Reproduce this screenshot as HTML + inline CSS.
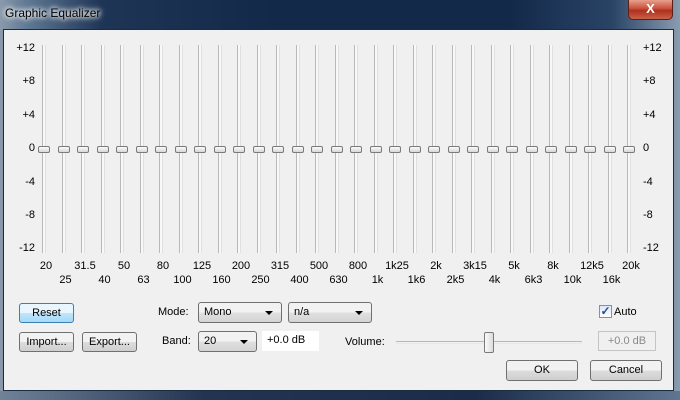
<!DOCTYPE html>
<html><head><meta charset="utf-8"><style>
*{margin:0;padding:0;box-sizing:border-box}
body{width:680px;height:400px;overflow:hidden;font-family:"Liberation Sans",sans-serif;font-size:11px;color:#000;position:relative;
background:linear-gradient(90deg,#8a9aab 0,#5f7893 4%,#1e3556 15%,#13294a 40%,#13294a 75%,#2a4466 90%,#8a9cb0 100%)}
.title{position:absolute;left:5px;top:6px;font-size:12px;color:#000;text-shadow:0 0 8px #fff,0 0 6px #fff,0 0 4px #fff}
.close{position:absolute;left:628px;top:0;width:45px;height:20px;border:1px solid #5a2018;border-top:none;border-radius:0 0 5px 5px;background:linear-gradient(#e8a08e,#c8503a 45%,#b03020 55%,#c86048);color:#fff;font-weight:bold;font-size:13px;text-align:center;line-height:18px}
.client{position:absolute;left:3px;top:29px;width:671px;height:362px;background:#f0f0f0;border:1px solid #1a2c44}
.bot{position:absolute;left:0;top:391px;width:680px;height:9px;background:linear-gradient(90deg,#6f8298,#22344f 30%,#1a2c48 70%,#5f7590)}
.a{position:absolute;white-space:nowrap}
.track{position:absolute;width:4px;top:45px;height:208px;border-left:1px solid #b8b8b8;border-right:1px solid #e0e0e0;background:#f8f8f8}
.thumb{position:absolute;width:12px;height:7px;top:146px;border:1px solid #7a7a7a;border-radius:2px;background:linear-gradient(#fafafa,#d8d8d8)}
.btn{position:absolute;height:20px;border:1px solid #707070;border-radius:3px;background:linear-gradient(#f2f2f2 50%,#dddddd 50%,#cfcfcf);text-align:center;line-height:18px}
.cb{position:absolute;height:21px;border:1px solid #707070;border-radius:3px;background:linear-gradient(#f2f2f2 50%,#e0e0e0 50%,#d4d4d4);padding-left:5px;line-height:19px}
.cb:after{content:"";position:absolute;right:8px;top:8px;border:4px solid transparent;border-top:4px solid #000;border-bottom:0}
</style></head><body>
<div class="title">Graphic Equalizer</div>
<div class="close">X</div>
<div class="bot"></div>
<div class="client"></div>
<div id="eq"></div>
<div class="btn" style="left:19px;top:303px;width:55px;border-color:#3c7fb1;background:linear-gradient(#eaf6fd 50%,#bee6fd 50%,#a7d9f5);">Reset</div>
<div class="btn" style="left:19px;top:332px;width:55px">Import...</div>
<div class="btn" style="left:82px;top:332px;width:55px">Export...</div>
<div class="a" style="left:158px;top:306px">Mode:</div>
<div class="a" style="left:162px;top:335px">Band:</div>
<div class="cb" style="left:198px;top:302px;width:84px">Mono</div>
<div class="cb" style="left:288px;top:302px;width:84px">n/a</div>
<div class="cb" style="left:198px;top:331px;width:59px">20</div>
<div class="a" style="left:262px;top:331px;width:57px;height:20px;background:#fff;padding:3px 0 0 5px">+0.0 dB</div>
<div class="a" style="left:345px;top:336px">Volume:</div>
<div class="a" style="left:396px;top:341px;width:186px;height:3px;border-top:1px solid #b8b8b8;border-bottom:1px solid #e8e8e8"></div>
<div class="a" style="left:484px;top:332px;width:10px;height:21px;border:1px solid #7a7a7a;border-radius:2px;background:linear-gradient(90deg,#fafafa,#dcdcdc)"></div>
<div class="a" style="left:598px;top:331px;width:58px;height:20px;border:1px solid #c4c4c4;color:#8a8a8a;text-align:center;line-height:18px">+0.0 dB</div>
<div class="a" style="left:599px;top:305px;width:13px;height:13px;border:1px solid #8e8f8f;background:linear-gradient(#dbe8f8,#fff);color:#2a4aa0;font-size:12px;font-weight:bold;line-height:11px;text-align:center">✓</div>
<div class="a" style="left:614px;top:306px">Auto</div>
<div class="btn" style="left:506px;top:360px;width:72px;height:21px;line-height:19px">OK</div>
<div class="btn" style="left:590px;top:360px;width:72px;height:21px;line-height:19px">Cancel</div>
<script>
var eq=document.getElementById('eq'),h='';
var f=['20','25','31.5','40','50','63','80','100','125','160','200','250','315','400','500','630','800','1k','1k25','1k6','2k','2k5','3k15','4k','5k','6k3','8k','10k','12k5','16k','20k'];
for(var i=0;i<31;i++){var x=44+i*19.5;
h+='<div class="track" style="left:'+(x-2)+'px"></div><div class="thumb" style="left:'+(x-6)+'px"></div>';
h+='<div class="a" style="left:'+(x-30)+'px;width:64px;text-align:center;top:'+(i%2?274:260)+'px">'+f[i]+'</div>';}
var d=['+12','+8','+4','0','-4','-8','-12'];
for(var j=0;j<7;j++){var y=42+j*33.4;
h+='<div class="a" style="left:0;width:35px;text-align:right;top:'+y+'px">'+d[j]+'</div>';
h+='<div class="a" style="left:643px;top:'+y+'px">'+d[j]+'</div>';}
eq.innerHTML=h;
</script>
</body></html>
